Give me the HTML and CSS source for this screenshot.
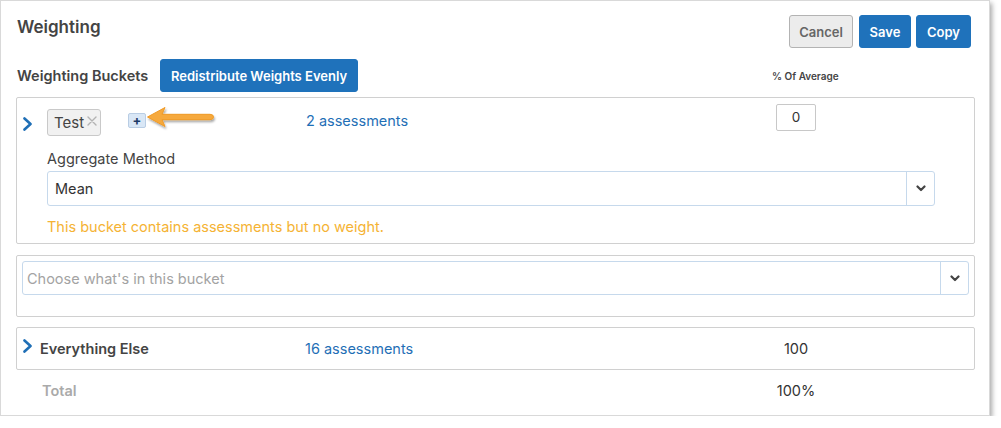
FILE: index.html
```html
<!DOCTYPE html>
<html>
<head>
<meta charset="utf-8">
<link rel="stylesheet" href="styles.css">
</head>
<body>
<div class="panel">
  <div class="header">
    <h1 class="title">Weighting</h1>
    <div class="actions">
      <button class="btn btn-cancel">Cancel</button>
      <button class="btn btn-primary btn-save">Save</button>
      <button class="btn btn-primary btn-copy">Copy</button>
    </div>
  </div>

  <div class="subhead">
    <span class="subhead-label">Weighting Buckets</span>
    <button class="btn btn-primary btn-redistribute">Redistribute Weights Evenly</button>
    <span class="col-head">% Of Average</span>
  </div>

  <div class="bucket bucket-main">
    <div class="bucket-row">
      <span class="chev"><svg width="11" height="14" viewBox="0 0 11 14"><path d="M2.5 1.5 L8.5 7 L2.5 12.5" fill="none" stroke="#1f6fb6" stroke-width="2.6" stroke-linecap="round" stroke-linejoin="round"/></svg></span>
      <div class="tags">
        <span class="tag">Test<span class="tag-x"><svg width="10" height="10" viewBox="0 0 10 10"><path d="M1 1 L9 9 M9 1 L1 9" stroke="#b3b3b3" stroke-width="1.4" stroke-linecap="round"/></svg></span></span>
        <span class="plus">+</span>
        <svg class="arrow" width="72" height="26" viewBox="0 0 72 26">
          <defs>
            <filter id="sh" x="-20%" y="-40%" width="140%" height="180%">
              <feDropShadow dx="1" dy="2" stdDeviation="1.2" flood-color="#000" flood-opacity="0.35"/>
            </filter>
          </defs>
          <path d="M1.5 11 L19 1.5 L16 8.3 L64 8.3 Q67.5 8.3 67.5 11 Q67.5 13.7 64 13.7 L16 13.7 L19 20.5 Z" fill="#f6a93d" stroke="#f09a26" stroke-width="1" stroke-linejoin="round" filter="url(#sh)"/>
        </svg>
      </div>
      <a class="link">2 assessments</a>
      <span class="weight-input">0</span>
    </div>
    <div class="bucket-detail">
      <div class="field-label">Aggregate Method</div>
      <div class="select">
        <span class="select-value">Mean</span>
        <span class="select-caret"><svg width="10" height="7" viewBox="0 0 10 7"><path d="M1.5 1.5 L5 5 L8.5 1.5" fill="none" stroke="#444" stroke-width="2.2" stroke-linecap="round" stroke-linejoin="round"/></svg></span>
      </div>
      <div class="warning">This bucket contains assessments but no weight.</div>
    </div>
  </div>

  <div class="bucket bucket-new">
    <div class="select select-wide">
      <span class="select-placeholder">Choose what's in this bucket</span>
      <span class="select-caret"><svg width="10" height="7" viewBox="0 0 10 7"><path d="M1.5 1.5 L5 5 L8.5 1.5" fill="none" stroke="#444" stroke-width="2.2" stroke-linecap="round" stroke-linejoin="round"/></svg></span>
    </div>
  </div>

  <div class="bucket bucket-else">
    <span class="chev chev-else"><svg width="11" height="14" viewBox="0 0 11 14"><path d="M2.5 1.5 L8.5 7 L2.5 12.5" fill="none" stroke="#1f6fb6" stroke-width="2.6" stroke-linecap="round" stroke-linejoin="round"/></svg></span>
    <span class="else-name">Everything Else</span>
    <a class="link">16 assessments</a>
    <span class="weight-value">100</span>
  </div>

  <div class="total-row">
    <span class="total-label">Total</span>
    <span class="weight-value">100%</span>
  </div>
</div>
</body>
</html>
```

FILE: styles.css
```css
* { box-sizing: border-box; }
html, body { margin: 0; padding: 0; background: #fff; }
body {
  font-family: Inter, "Noto Sans", "Liberation Sans", sans-serif;
  color: #333;
  font-size: 14.5px;
}
.panel {
  width: 990px;
  height: 416px;
  border: 1px solid #d9d9d9;
  background: #fff;
  box-shadow: 2px 3px 5px rgba(0, 0, 0, 0.35);
  padding: 14px 15px 0 15px;
}
.header {
  display: flex;
  justify-content: space-between;
  align-items: flex-start;
  height: 33px;
}
.title {
  margin: 2px 0 0 1px;
  font-size: 17px;
  font-weight: 600;
  color: #444;
  line-height: 20px;
}
.actions {
  display: flex;
  gap: 6px;
  margin-right: 3px;
}
.btn {
  font-family: inherit;
  height: 33px;
  border-radius: 3px;
  font-size: 13px;
  font-weight: 600;
  padding: 0;
  cursor: pointer;
}
.btn-cancel {
  background: #ececec;
  border: 1px solid #b3b3b3;
  color: #666;
  width: 64px;
}
.btn-primary {
  background: #1f72bb;
  border: 1px solid #1f72bb;
  color: #fff;
}
.btn-save { width: 52px; }
.btn-copy { width: 55px; margin-left: -1px; }
.subhead {
  display: flex;
  align-items: center;
  margin-top: 11px;
  height: 33px;
}
.subhead-label {
  font-weight: 600;
  font-size: 14.5px;
  color: #444;
  margin-left: 1px;
  width: 143px;
}
.btn-redistribute {
  width: 198px;
}
.col-head {
  margin-left: 414px;
  margin-top: 1px;
  font-size: 10px;
  font-weight: 600;
  color: #444;
}
.bucket {
  border: 1px solid #d0d0d0;
  border-radius: 2px;
  width: 959px;
}
.bucket-main {
  margin-top: 5px;
  height: 147px;
  padding: 6px 0 0 5px;
}
.bucket-row {
  display: grid;
  grid-template-columns: 25px 259px 470px 40px;
  align-items: start;
  height: 32px;
}
.chev {
  display: flex;
  margin-top: 13px;
}
.tags {
  position: relative;
  display: flex;
  align-items: flex-start;
  padding-top: 5px;
}
.tag {
  display: inline-flex;
  align-items: center;
  height: 27px;
  width: 54px;
  padding-left: 6px;
  border: 1px solid #c9c9c9;
  border-radius: 3px;
  background: #f1f1f1;
  font-size: 15px;
  color: #444;
}
.tag-x {
  display: flex;
  margin: -4px 0 0 3px;
}
.plus {
  margin: 4px 0 0 27px;
  width: 18px;
  height: 15px;
  border: 1px solid #b9cde4;
  border-radius: 2px;
  background: #d9e7f6;
  color: #1d3a66;
  font-size: 13px;
  font-weight: 700;
  line-height: 12px;
  text-align: center;
}
.arrow {
  position: absolute;
  left: 99px;
  top: 2px;
}
.link {
  color: #1f6fb6;
  font-size: 14.5px;
  line-height: 20px;
  margin-top: 7px;
  cursor: pointer;
}
.weight-input {
  display: block;
  width: 40px;
  height: 27px;
  border: 1px solid #c8c8c8;
  border-radius: 2px;
  text-align: center;
  line-height: 25px;
  font-size: 13.5px;
  color: #333;
}
.bucket-detail {
  padding: 13px 0 0 25px;
}
.field-label {
  font-size: 14.5px;
  line-height: 20px;
  color: #444;
}
.select {
  display: flex;
  align-items: center;
  margin-top: 2px;
  width: 888px;
  height: 35px;
  border: 1px solid #c6d9ec;
  border-radius: 3px;
  background: #fff;
}
.select-value {
  flex: 1;
  padding-left: 7px;
  font-size: 14.5px;
  color: #333;
}
.select-placeholder {
  flex: 1;
  padding-left: 4px;
  font-size: 14.5px;
  color: #a3a3a3;
}
.select-caret {
  width: 28px;
  height: 100%;
  border-left: 1px solid #c6d9ec;
  display: flex;
  align-items: center;
  justify-content: center;
}
.warning {
  margin-top: 11px;
  font-size: 14.5px;
  line-height: 20px;
  color: #f5b334;
}
.bucket-new {
  margin-top: 11px;
  height: 62px;
  padding: 6px 5px 0 5px;
}
.select-wide {
  width: 947px;
  height: 34px;
  margin-top: -1px;
}
.bucket-else {
  margin-top: 10px;
  height: 43px;
  display: grid;
  grid-template-columns: 18px 265px 471px 40px;
  align-items: center;
  padding-left: 5px;
}
.chev-else {
  margin-top: -6px;
}
.else-name {
  font-weight: 600;
  font-size: 14.5px;
  color: #444;
}
.bucket-else .link { margin-top: 0; }
.weight-value {
  text-align: center;
  font-size: 14.5px;
  color: #333;
}
.total-row {
  display: grid;
  grid-template-columns: 734px 40px;
  align-items: center;
  height: 40px;
  padding-left: 26px;
}
.total-label {
  font-weight: 600;
  color: #aaa;
  font-size: 14.5px;
}
```
